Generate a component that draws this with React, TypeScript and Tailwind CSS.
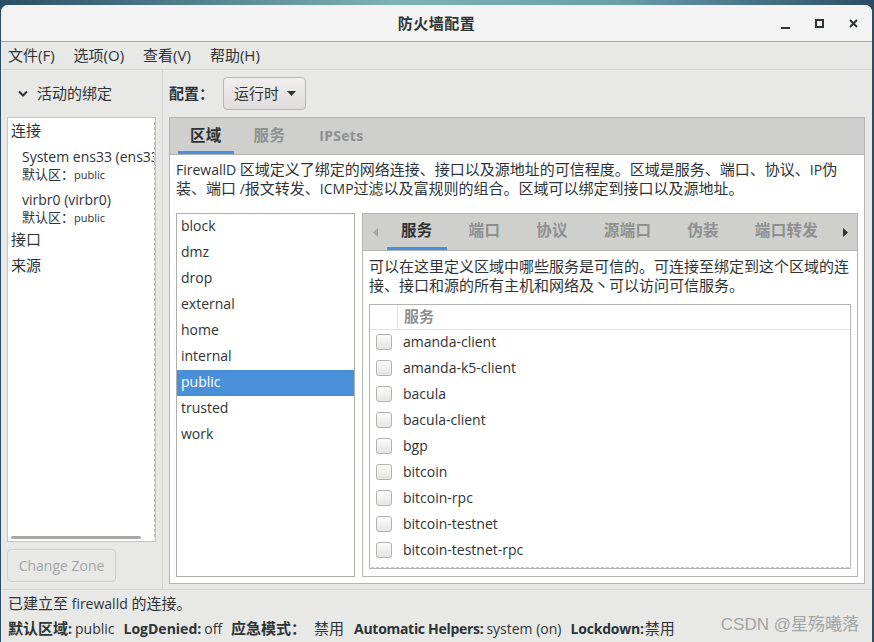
import React from "react";

const CJK = /([\u2E80-\u9FFF\u3000-\u303F\uFF00-\uFFEF]+)/;
function T({ t, c = "text-[15px]" }: { t: string; c?: string }) {
  return (
    <>
      {t.split(CJK).map((p, i) =>
        p && CJK.test(p) ? (
          <span key={i} className={c}>
            {p}
          </span>
        ) : (
          <React.Fragment key={i}>{p}</React.Fragment>
        )
      )}
    </>
  );
}

const zones = ["block", "dmz", "drop", "external", "home", "internal", "public", "trusted", "work"];
const services = [
  "amanda-client",
  "amanda-k5-client",
  "bacula",
  "bacula-client",
  "bgp",
  "bitcoin",
  "bitcoin-rpc",
  "bitcoin-testnet",
  "bitcoin-testnet-rpc",
];
const innerTabs = ["服务", "端口", "协议", "源端口", "伪装", "端口转发"];

function Checkbox() {
  return (
    <div className="w-[16px] h-[16px] rounded-[3px] border border-[#b2b2af] bg-linear-to-b from-[#fdfdfd] to-[#e4e4e2] shrink-0" />
  );
}

export default function App() {
  return (
    <div className="w-[874px] h-[642px] overflow-hidden bg-[linear-gradient(90deg,#2b4d68,#7db3b4_45%,#6aa0ab_70%,#2b4d68)] pt-[5px] pl-[1px] font-['Open_Sans','Noto_Sans_CJK_SC',sans-serif] text-[14px] text-[#2e3436]">
      <div className="w-[871px] h-[637px] rounded-t-[7px] bg-[#e8e8e7] flex flex-col overflow-hidden">
        {/* Title bar */}
        <div className="h-[37px] shrink-0 bg-[#f3f3f3] border-b border-[#a6a6a4] relative flex items-center justify-center">
          <span className="text-[15px] font-bold tracking-[0.5px]">防火墙配置</span>
          <div className="absolute right-[14px] top-0 h-full flex items-center gap-[25px]">
            <svg width="9" height="9" viewBox="0 0 9 9" className="mt-[4px]">
              <rect x="0" y="6" width="9" height="2" fill="#2e3436" />
            </svg>
            <svg width="9" height="9" viewBox="0 0 9 9">
              <rect x="1" y="1" width="7" height="7" fill="none" stroke="#2e3436" strokeWidth="2" />
            </svg>
            <svg width="9" height="9" viewBox="0 0 9 9">
              <path d="M1 1L8 8M8 1L1 8" stroke="#2e3436" strokeWidth="2" />
            </svg>
          </div>
        </div>

        {/* Menu bar */}
        <div className="h-[28px] shrink-0 border-b border-[#d3d3d1] flex items-center pl-[7px] gap-[19px] text-[15px]">
          <span>文件(F)</span>
          <span>选项(O)</span>
          <span>查看(V)</span>
          <span>帮助(H)</span>
        </div>

        {/* Main */}
        <div className="flex-1 flex min-h-0">
          {/* Left pane */}
          <div className="w-[162px] shrink-0 border-r border-[#d0d0ce] flex flex-col">
            <div className="h-[47px] flex items-center pl-[17px] gap-[9px]">
              <svg width="10" height="7" viewBox="0 0 10 7">
                <path d="M1 1.5L5 5.5L9 1.5" fill="none" stroke="#2e3436" strokeWidth="2" />
              </svg>
              <span className="text-[15px]">活动的绑定</span>
            </div>
            <div className="mx-[6px] h-[425px] bg-white border border-[#c4c4c1] relative overflow-hidden">
              <div className="w-[146px] overflow-hidden whitespace-nowrap">
                <div className="h-[25px] leading-[24px] pl-[3px] text-[15px]">连接</div>
                <div className="pl-[14px] pt-[5px]">
                  <div className="leading-[18px]">System ens33 (ens33)</div>
                  <div className="leading-[16px] text-[11px]"><T t="默认区：" c="text-[13px]" />public</div>
                </div>
                <div className="pl-[14px] pt-[8px]">
                  <div className="leading-[18px]">virbr0 (virbr0)</div>
                  <div className="leading-[16px] text-[11px]"><T t="默认区：" c="text-[13px]" />public</div>
                </div>
                <div className="h-[26px] mt-[1px] leading-[24px] pl-[3px] text-[15px]">接口</div>
                <div className="h-[26px] leading-[24px] pl-[3px] text-[15px]">来源</div>
              </div>
              <div className="absolute top-[4px] bottom-[4px] left-[146px] border-l border-dashed border-[#b6b6b3]" />
              <div className="absolute bottom-[2px] left-[3px] w-[130px] h-[3px] rounded-full bg-[#a7a9a7]" />
            </div>
            <div className="mt-[7px] ml-[6px] w-[109px] h-[33px] rounded-[4px] border border-[#cfcfcc] flex items-center justify-center text-[#a4a6a4] text-[14px]">
              Change Zone
            </div>
          </div>

          {/* Right pane */}
          <div className="flex-1 min-w-0 pl-[6px] pr-[7px] flex flex-col">
            <div className="h-[47px] flex items-center">
              <span className="text-[15px] font-bold w-[54px]">配置：</span>
              <div className="w-[83px] h-[33px] rounded-[4px] border border-[#b6b6b3] bg-linear-to-b from-[#f0efee] to-[#dedddb] flex items-center pl-[10px] gap-[8px]">
                <span className="text-[15px]">运行时</span>
                <svg width="9" height="5" viewBox="0 0 9 5">
                  <path d="M0 0H9L4.5 5Z" fill="#2e3436" />
                </svg>
              </div>
            </div>

            {/* Outer notebook */}
            <div className="h-[467px] border border-[#b4b4b1] flex flex-col">
              <div className="h-[37px] shrink-0 bg-[#cfcfcd] border-b border-[#b4b4b1] flex pl-[8px] gap-[8px]">
                <div className="px-[12px] flex items-center border-b-[3px] border-[#4a90d9] pt-[2px] text-[15.5px] font-bold text-[#2e3436] tracking-[0.3px]">区域</div>
                <div className="px-[12px] flex items-center border-b-[3px] border-transparent pt-[2px] text-[15.5px] font-bold text-[#8e9090] tracking-[0.3px]">服务</div>
                <div className="px-[12px] ml-[2px] flex items-center border-b-[3px] border-transparent pt-[2px] text-[14px] font-bold text-[#8e9090] tracking-[0.3px]">IPSets</div>
              </div>
              <div className="flex-1 bg-white flex flex-col px-[6px] pt-[5px] pb-[6px] min-h-0">
                <div className="leading-[19px] whitespace-nowrap">
                  <div>FirewallD <T t="区域定义了绑定的网络连接、接口以及源地址的可信程度。区域是服务、端口、协议、" />IP<T t="伪" /></div>
                  <div><T t="装、端口 /报文转发、" />ICMP<T t="过滤以及富规则的组合。区域可以绑定到接口以及源地址。" /></div>
                </div>
                <div className="mt-[15px] flex-1 flex min-h-0">
                  {/* Zone list */}
                  <div className="w-[179px] shrink-0 border border-[#aeaeab] bg-white">
                    {zones.map((z) => (
                      <div
                        key={z}
                        className={
                          z === "public"
                            ? "h-[26px] flex items-center pl-[4px] pb-[4px] bg-[#4a90d9] text-white"
                            : "h-[26px] flex items-center pl-[4px] pb-[4px]"
                        }
                      >
                        {z}
                      </div>
                    ))}
                  </div>

                  {/* Inner notebook */}
                  <div className="ml-[7px] flex-1 min-w-0 border border-[#b4b4b1] flex flex-col">
                    <div className="h-[37px] shrink-0 bg-[#cfcfcd] border-b border-[#b4b4b1] flex items-stretch">
                      <div className="w-[24px] flex items-center justify-center">
                        <svg width="5" height="9" viewBox="0 0 5 9">
                          <path d="M5 0V9L0 4.5Z" fill="#a3a5a3" />
                        </svg>
                      </div>
                      <div className="flex gap-[8px] flex-1 overflow-hidden">
                        {innerTabs.map((t, i) => (
                          <div
                            key={t}
                            className={
                              i === 0
                                ? "px-[14px] flex items-center border-b-[3px] border-[#4a90d9] pt-[1px] text-[15.5px] font-bold text-[#2e3436] whitespace-nowrap tracking-[0.3px]"
                                : "px-[14px] flex items-center border-b-[3px] border-transparent pt-[1px] text-[15.5px] font-bold text-[#8e9090] whitespace-nowrap tracking-[0.3px]"
                            }
                          >
                            {t}
                          </div>
                        ))}
                      </div>
                      <div className="w-[24px] flex items-center justify-center">
                        <svg width="5" height="9" viewBox="0 0 5 9">
                          <path d="M0 0V9L5 4.5Z" fill="#2e3436" />
                        </svg>
                      </div>
                    </div>
                    <div className="flex-1 bg-white px-[6px] pt-[6px] pb-[7px] flex flex-col min-h-0">
                      <div className="leading-[19px] whitespace-nowrap">
                        <div><T t="可以在这里定义区域中哪些服务是可信的。可连接至绑定到这个区域的连" /></div>
                        <div><T t="接、接口和源的所有主机和网络及丶可以访问可信服务。" /></div>
                      </div>
                      <div className="mt-[9px] flex-1 border border-[#b4b4b1] bg-white relative overflow-hidden flex flex-col">
                        <div className="h-[25px] shrink-0 border-b border-[#e0e0de] flex">
                          <div className="w-[28px] border-r border-[#e0e0de]" />
                          <div className="pl-[6px] pb-[2px] flex items-center text-[15px] font-bold text-[#8e9090]">服务</div>
                        </div>
                        {services.map((s) => (
                          <div key={s} className="h-[26px] shrink-0 flex items-center pl-[6px] gap-[11px]">
                            <div className="pb-[2px]"><Checkbox /></div>
                            <span className="pb-[4px]">{s}</span>
                          </div>
                        ))}
                        <div className="absolute left-[1px] right-[1px] bottom-[0px] border-b border-dashed border-[#c4c4c1]" />
                      </div>
                    </div>
                  </div>
                </div>
              </div>
            </div>
          </div>
        </div>

        {/* Status */}
        <div className="h-[53px] shrink-0 border-t border-[#d3d3d1] pl-[7px] pt-[1px] relative whitespace-nowrap">
          <div className="leading-[25px]"><T t="已建立至" />  firewalld <T t="的连接。" /></div>
          <div className="leading-[25px] flex">
            <span className="font-bold"><T t="默认区域" />:</span>
            <span className="ml-[3px]">public</span>
            <span className="font-bold ml-[9px]">LogDenied:</span>
            <span className="ml-[3px]">off</span>
            <span className="font-bold ml-[9px]"><T t="应急模式：" /></span>
            <span className="ml-[8px]"><T t="禁用" /></span>
            <span className="font-bold ml-[10px] tracking-[-0.3px]">Automatic Helpers:</span>
            <span className="ml-[3px]">system (on)</span>
            <span className="font-bold ml-[9px] tracking-[-0.2px]">Lockdown:</span>
            <span className="ml-[1px]"><T t="禁用" /></span>
          </div>
          <div className="absolute right-[13px] bottom-[5px] text-[17px] text-[#a2a4a4] font-['Liberation_Sans','Noto_Sans_CJK_SC',sans-serif]">
            CSDN @星殇曦落
          </div>
        </div>
      </div>
    </div>
  );
}
